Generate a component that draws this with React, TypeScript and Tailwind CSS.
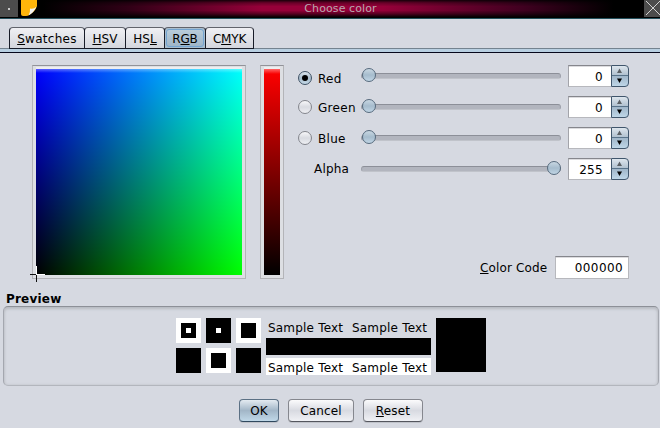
import React from "react";

function Mnemonic({ text, at }: { text: string; at: number }) {
  return (
    <span className="whitespace-pre">
      {text.slice(0, at)}
      <span className="underline decoration-1 underline-offset-[1px] [text-decoration-skip-ink:none]">{text[at]}</span>
      {text.slice(at + 1)}
    </span>
  );
}

const tabs = [
  { text: "Swatches", at: 0, width: "w-[76px]", tracking: "tracking-[0.3px]" },
  { text: "HSV", at: 0, width: "w-[42px]", tracking: "tracking-[0.1px]" },
  { text: "HSL", at: 2, width: "w-[40px]", tracking: "tracking-[0.1px]" },
  { text: "RGB", at: 1, width: "w-[42px]", tracking: "tracking-[-0.2px]", active: true },
  { text: "CMYK", at: 1, width: "w-[49px]", tracking: "tracking-[-0.2px]" },
];

function TitleBar() {
  return (
    <header className="flex h-[19px] shrink-0 border-b border-[#24505c] bg-black">
      <div className="flex h-[17px] w-[18px] items-center justify-center bg-[#4c4c4c]">
        <span className="size-[2px] bg-[#c8c8c8]" />
      </div>
      <svg className="ml-[3px] h-[16px] w-[16px]" viewBox="0 0 16 16">
        <path d="M0 0H16V6Q14 12 8 15Q7 16 5 16H2Q0 16 0 14Z" fill="#ffb50a" />
        <path d="M9 8.500Q13 9.500 15.500 6.500Q13 12.500 7.500 15.500Q9.500 12 9 8.500Z" fill="#f2f2f2" />
      </svg>
      <div className="relative flex h-[18px] flex-1 justify-center bg-[linear-gradient(90deg,#000_1%,#300016_15%,#960039_37%,#960039_57%,#400020_80%,#000_95%)]">
        <div className="absolute inset-0 bg-[linear-gradient(180deg,rgba(0,0,0,0.85)_0%,rgba(0,0,0,0.3)_16%,transparent_36%,transparent_58%,rgba(0,0,0,0.4)_76%,#000_96%)]" />
        <span className="relative text-[11px] leading-[17px] tracking-[0.1px] text-[#b8a8ae]">Choose color</span>
      </div>
      <svg className="h-[17px] w-[16px] bg-[#4c4c4c]" viewBox="0 0 16 17" shapeRendering="crispEdges">
        <path d="M2 1L16 15M2 15L16 1" stroke="#d0d0d0" strokeWidth="1" />
      </svg>
    </header>
  );
}

function Tabs() {
  return (
    <nav className="flex h-[34px] shrink-0 flex-col">
      <div className="flex h-[30px] items-end pl-[9px]">
        {tabs.map((t, i) => (
          <div
            key={t.text}
            className={`relative flex h-[22px] items-center justify-center rounded-t-[4px] border border-b-[#181c28] border-l-[#181c28] border-r-[#181c28] border-t-[#62646c] pt-px text-[12px] ${t.width} ${t.tracking} ${i ? "-ml-px" : ""} ${t.active ? "bg-[#a9bdce]" : "bg-linear-to-b from-[#f0f0f4] to-[#d4d6dd]"}`}
          >
            {t.active && <span className="absolute inset-[1px] rounded-[3px] border border-[#73a4d1] bg-linear-to-b from-[#b8ccda] to-[#9fb5c8]" />}
            <span className="relative"><Mnemonic text={t.text} at={t.at} /></span>
          </div>
        ))}
      </div>
      <div className="-mt-px h-[5px] border-b border-t border-b-[#06071b] border-t-[#74838f] bg-[#b8cfe1]" />
    </nav>
  );
}

function Knob() {
  return <span className="block size-[14px] shrink-0 rounded-full border border-[#566a7d] bg-linear-to-b from-[#c8d7e2] via-[#a6bccd] to-[#c0d5e5]" />;
}

function Slider({ end }: { end?: boolean }) {
  return (
    <div className="relative flex h-[14px] w-[200px] items-start">
      <div className="mt-[4px] h-[6px] w-full rounded-full border border-b-[#c0c3ca] border-l-[#9ea1aa] border-r-[#9ea1aa] border-t-[#8c8f98] bg-[#b2b5be]" />
      <div className={`absolute top-[-1px] ${end ? "right-0" : "left-[1px]"}`}><Knob /></div>
    </div>
  );
}

function Spinner({ value }: { value: string }) {
  return (
    <div className="flex h-[22px] w-[61px]">
      <div className="w-[43px] border border-r-0 border-b-[#b7b8bd] border-l-[#a3a4aa] border-t-[#85868c] bg-white pr-[8px] text-right text-[12px] leading-[22px] tracking-[0.3px] shadow-[inset_0_1px_0_#dcdcdf]">{value}</div>
      <svg className="h-[22px] w-[18px]" viewBox="0 0 18 22">
        <defs>
          <linearGradient id="spin" x1="0" y1="0" x2="0" y2="1">
            <stop offset="0" stopColor="#e0e8ef" /><stop offset=".48" stopColor="#aebfce" />
            <stop offset=".52" stopColor="#a1b7ca" /><stop offset="1" stopColor="#c0d8e9" />
          </linearGradient>
        </defs>
        <path d="M.5.5H14Q17.500.5 17.500 4V18Q17.500 21.500 14 21.500H.5Z" fill="url(#spin)" stroke="#40566c" />
        <path d="M1 10.500H17" stroke="#58738a" />
        <path d="M6 8H11L8.500 3.500Z" fill="#5b6065" />
        <path d="M6 13.500H11L8.500 18Z" fill="#000" />
      </svg>
    </div>
  );
}

function Channel({ label, checked }: { label: string; checked?: boolean }) {
  return (
    <div className="flex h-[31px] items-start">
      <div className={`flex w-[63px] items-center ${checked ? "h-[26px]" : "h-[22px]"}`}>
        <span className={`flex size-[14px] items-center justify-center rounded-full border ${checked ? "border-[#3f5265] bg-linear-to-b from-[#dce5ed] via-[#a8bccc] to-[#c4d9e8]" : "border-[#84868d] bg-linear-to-b from-[#f8f8fa] via-[#d9dbe1] to-[#eeeff3]"}`}>
          {checked && <span className="size-[6px] rounded-full bg-black" />}
        </span>
        <span className="ml-[6px] pt-px text-[12px] tracking-[0.3px]">{label}</span>
      </div>
      <div className="pt-[4px]"><Slider /></div>
      <div className="ml-[7px]"><Spinner value="0" /></div>
    </div>
  );
}

function Picker() {
  return (
    <section className="flex h-[239px] shrink-0 pl-[32px] pt-[12px]">
      <div className="relative h-[214px] w-[214px] border border-[#b3b4b8] border-t-[#929399] bg-[#dddfe3] p-[3px]">
        <div className="h-[206px] w-[206px] bg-[linear-gradient(to_top,#000,#00f),linear-gradient(to_right,#000,#0f0)] bg-blend-screen shadow-[0_-2px_0_#eeeef0]">
          <div className="h-[4px] bg-linear-to-b from-white/35 to-transparent" />
        </div>
        <svg className="absolute left-[-3px] top-[200px] h-[16px] w-[16px]" viewBox="0 0 16 16" shapeRendering="crispEdges">
          <path d="M6 0h1v8h8v1H6Z" fill="#fff" />
          <path d="M0 8h6v1H0zM6 9h1v7H6z" fill="#111" />
        </svg>
      </div>
      <div className="ml-[14px] h-[214px] w-[24px] border border-[#b3b4b8] border-t-[#929399] bg-[#dddfe3] p-[3px]">
        <div className="h-[206px] w-[16px] bg-[linear-gradient(to_bottom,#f00,#000)] shadow-[0_-2px_0_#eeeef0]">
          <div className="h-[5px] bg-linear-to-b from-white/40 to-transparent" />
        </div>
      </div>
      <div className="ml-[14px] flex w-[331px] flex-col">
        <Channel label="Red" checked />
        <Channel label="Green" />
        <Channel label="Blue" />
        <div className="flex h-[31px] items-start">
          <span className="w-[63px] pl-[16px] text-[12px] leading-[23px] tracking-[0.2px]">Alpha</span>
          <div className="pt-[4px]"><Slider end /></div>
          <div className="ml-[7px]"><Spinner value="255" /></div>
        </div>
        <div className="mt-[67px] flex h-[23px] items-center">
          <span className="ml-[182px] w-[75px] text-[12px] tracking-[0.15px]"><Mnemonic text="Color Code" at={0} /></span>
          <div className="h-[23px] w-[74px] border border-[#b7b8bd] border-t-[#85868c] bg-white pr-[5px] text-right text-[12px] leading-[22px] tracking-[0.4px] shadow-[inset_0_1px_0_#dcdcdf]">000000</div>
        </div>
      </div>
    </section>
  );
}

const swatches = [
  { outer: "bg-white", inner: "bg-black", core: "bg-white" },
  { outer: "bg-black", inner: "bg-black", core: "bg-white" },
  { outer: "bg-white", inner: "bg-black", core: "bg-black" },
  { outer: "bg-black", inner: "bg-black", core: "bg-black" },
  { outer: "bg-white", inner: "bg-black", core: "bg-black" },
  { outer: "bg-black", inner: "bg-black", core: "bg-black" },
];

function Samples() {
  return (
    <div className="flex h-[17px] w-[165px] gap-[8px] whitespace-nowrap pl-[2px] text-[12px] leading-[20px] tracking-[0.2px]">
      <span className="w-[76px]">Sample Text</span>
      <span>Sample Text</span>
    </div>
  );
}

function Preview() {
  return (
    <section className="flex h-[95px] shrink-0 flex-col">
      <h2 className="h-[14px] pl-[6px] text-[12px] font-bold leading-[14px] tracking-[0.2px]">Preview</h2>
      <div className="ml-[3px] flex h-[80px] w-[656px] gap-[5px] rounded-[5px] border border-b-[#b3b6bd] border-l-[#a4a7af] border-r-[#a4a7af] border-t-[#8d9097] pl-[172px] pt-[11px] shadow-[inset_0_2px_3px_#b8bbc2,inset_0_0_3px_#c0c3c9]">
        <div className="grid h-[55px] w-[85px] grid-cols-3 gap-[5px]">
          {swatches.map((s, i) => (
            <div key={i} className={`flex size-[25px] items-center justify-center ${s.outer}`}>
              <div className={`flex size-[15px] items-center justify-center ${s.inner}`}>
                <div className={`size-[5px] ${s.core}`} />
              </div>
            </div>
          ))}
        </div>
        <div className="flex flex-col gap-[3px]">
          <Samples />
          <div className="h-[17px] w-[165px] bg-black" />
          <div className="bg-white"><Samples /></div>
        </div>
        <div className="h-[54px] w-[50px] bg-black" />
      </div>
    </section>
  );
}

function Button({ width, primary, children }: { width: string; primary?: boolean; children: React.ReactNode }) {
  return (
    <button className={`flex h-[23px] items-center justify-center rounded-[4px] border text-[12px] tracking-[0.15px] shadow-[0_1px_0_#bfc2c9] ${width} ${primary ? "border-[#5b7084] border-b-[#2f485e] bg-linear-to-b from-[#e4ebf1] via-[#a2b6c7] to-[#c0d8e8]" : "border-[#85878e] border-b-[#54565e] bg-linear-to-b from-[#fbfbfc] via-[#d8dae1] to-[#f0f1f5]"}`}>
      {children}
    </button>
  );
}

export default function App() {
  return (
    <main className="flex h-[428px] w-[660px] flex-col overflow-hidden bg-[#d6d9e1] font-['DejaVu_Sans',sans-serif] text-black">
      <TitleBar />
      <Tabs />
      <Picker />
      <Preview />
      <footer className="flex gap-[9px] pl-[239px] pt-[12px]">
        <Button width="w-[40px]" primary>OK</Button>
        <Button width="w-[66px]">Cancel</Button>
        <Button width="w-[60px]"><Mnemonic text="Reset" at={0} /></Button>
      </footer>
    </main>
  );
}
